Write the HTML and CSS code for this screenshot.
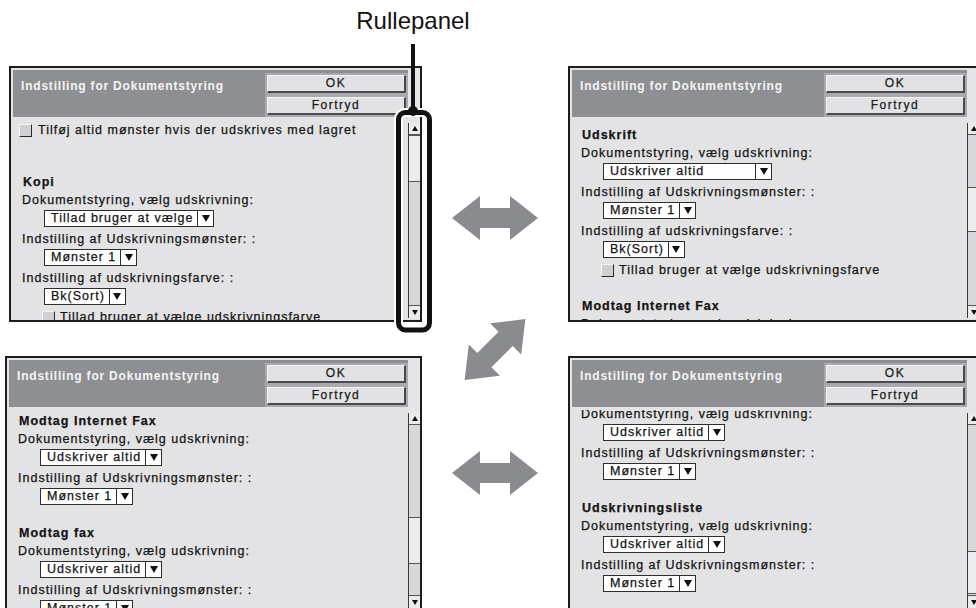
FILE: index.html
```html
<!DOCTYPE html>
<html lang="da">
<head>
    <meta charset="UTF-8">
    <title>Rullepanel</title>
    <link rel="stylesheet" href="styles.css">
</head>
<body>
    <div class="canvas">
        <div class="screens">

            <!-- 1: top of the list -->
            <div class="panel">
                <div class="main">
                    <div class="header">
                        <div class="title">Indstilling for Dokumentstyring</div>
                        <div class="btns">
                            <div class="btn">OK</div>
                            <div class="btn">Fortryd</div>
                        </div>
                    </div>
                    <div class="body">
                        <div class="list">
                            <div class="check"><span class="box"></span>Tilføj altid mønster hvis der udskrives med lagret</div>
                            <div class="gap big"></div>
                            <div class="head">Kopi</div>
                            <div class="line">Dokumentstyring, vælg udskrivning:</div>
                            <div class="pick"><span class="select"><span class="val">Tillad bruger at vælge</span><span class="arrow"></span></span></div>
                            <div class="line">Indstilling af Udskrivningsmønster: :</div>
                            <div class="pick"><span class="select"><span class="val">Mønster 1</span><span class="arrow"></span></span></div>
                            <div class="line">Indstilling af udskrivningsfarve: :</div>
                            <div class="pick"><span class="select"><span class="val">Bk(Sort)</span><span class="arrow"></span></span></div>
                            <div class="check sub"><span class="box"></span>Tillad bruger at vælge udskrivningsfarve</div>
                        </div>
                    </div>
                </div>
                <div class="side">
                    <div class="sb">
                        <div class="sb-btn up"></div>
                        <div class="sb-track"><div class="sb-thumb" style="margin-top:0;height:47px"></div></div>
                        <div class="sb-btn down"></div>
                    </div>
                </div>
            </div>

            <!-- 2 -->
            <div class="panel">
                <div class="main">
                    <div class="header">
                        <div class="title">Indstilling for Dokumentstyring</div>
                        <div class="btns">
                            <div class="btn">OK</div>
                            <div class="btn">Fortryd</div>
                        </div>
                    </div>
                    <div class="body">
                        <div class="list" style="margin-top:8px">
                            <div class="head">Udskrift</div>
                            <div class="line">Dokumentstyring, vælg udskrivning:</div>
                            <div class="pick"><span class="select wide"><span class="val">Udskriver altid</span><span class="arrow"></span></span></div>
                            <div class="line">Indstilling af Udskrivningsmønster: :</div>
                            <div class="pick"><span class="select"><span class="val">Mønster 1</span><span class="arrow"></span></span></div>
                            <div class="line">Indstilling af udskrivningsfarve: :</div>
                            <div class="pick"><span class="select"><span class="val">Bk(Sort)</span><span class="arrow"></span></span></div>
                            <div class="check sub"><span class="box"></span>Tillad bruger at vælge udskrivningsfarve</div>
                            <div class="gap"></div>
                            <div class="head">Modtag Internet Fax</div>
                            <div class="line">Dokumentstyring, vælg udskrivning:</div>
                        </div>
                    </div>
                </div>
                <div class="side">
                    <div class="sb">
                        <div class="sb-btn up"></div>
                        <div class="sb-track"><div class="sb-thumb" style="margin-top:52px;height:45px"></div></div>
                        <div class="sb-btn down"></div>
                    </div>
                </div>
            </div>

            <!-- 3 -->
            <div class="panel shift">
                <div class="main">
                    <div class="header">
                        <div class="title">Indstilling for Dokumentstyring</div>
                        <div class="btns">
                            <div class="btn">OK</div>
                            <div class="btn">Fortryd</div>
                        </div>
                    </div>
                    <div class="body">
                        <div class="list" style="margin-top:4px">
                            <div class="head">Modtag Internet Fax</div>
                            <div class="line">Dokumentstyring, vælg udskrivning:</div>
                            <div class="pick"><span class="select"><span class="val">Udskriver altid</span><span class="arrow"></span></span></div>
                            <div class="line">Indstilling af Udskrivningsmønster: :</div>
                            <div class="pick"><span class="select"><span class="val">Mønster 1</span><span class="arrow"></span></span></div>
                            <div class="gap"></div>
                            <div class="head">Modtag fax</div>
                            <div class="line">Dokumentstyring, vælg udskrivning:</div>
                            <div class="pick"><span class="select"><span class="val">Udskriver altid</span><span class="arrow"></span></span></div>
                            <div class="line">Indstilling af Udskrivningsmønster: :</div>
                            <div class="pick"><span class="select"><span class="val">Mønster 1</span><span class="arrow"></span></span></div>
                        </div>
                    </div>
                </div>
                <div class="side">
                    <div class="sb">
                        <div class="sb-btn up"></div>
                        <div class="sb-track"><div class="sb-thumb" style="margin-top:92px;height:47px"></div></div>
                        <div class="sb-btn down"></div>
                    </div>
                </div>
            </div>

            <!-- 4: bottom of the list -->
            <div class="panel">
                <div class="main">
                    <div class="header">
                        <div class="title">Indstilling for Dokumentstyring</div>
                        <div class="btns">
                            <div class="btn">OK</div>
                            <div class="btn">Fortryd</div>
                        </div>
                    </div>
                    <div class="body">
                        <div class="list" style="margin-top:-6px">
                            <div class="line">Dokumentstyring, vælg udskrivning:</div>
                            <div class="pick"><span class="select"><span class="val">Udskriver altid</span><span class="arrow"></span></span></div>
                            <div class="line">Indstilling af Udskrivningsmønster: :</div>
                            <div class="pick"><span class="select"><span class="val">Mønster 1</span><span class="arrow"></span></span></div>
                            <div class="gap"></div>
                            <div class="head">Udskrivningsliste</div>
                            <div class="line">Dokumentstyring, vælg udskrivning:</div>
                            <div class="pick"><span class="select"><span class="val">Udskriver altid</span><span class="arrow"></span></span></div>
                            <div class="line">Indstilling af Udskrivningsmønster: :</div>
                            <div class="pick"><span class="select"><span class="val">Mønster 1</span><span class="arrow"></span></span></div>
                        </div>
                    </div>
                </div>
                <div class="side">
                    <div class="sb">
                        <div class="sb-btn up"></div>
                        <div class="sb-track"><div class="sb-thumb" style="margin-top:126px;height:43px"></div></div>
                        <div class="sb-btn down"></div>
                    </div>
                </div>
            </div>

        </div>

        <div class="label">Rullepanel</div>

        <svg class="overlay" width="976" height="608" viewBox="0 0 976 608">
            <!-- callout on the scroll bar -->
            <line x1="413" y1="44" x2="413" y2="112" stroke="#111" stroke-width="4"/>
            <rect x="398.5" y="112.5" width="31" height="217.5" rx="7" fill="none" stroke="#fff" stroke-width="9"/>
            <rect x="398.5" y="112.5" width="31" height="217.5" rx="7" fill="none" stroke="#111" stroke-width="5"/>
            <circle cx="413" cy="111" r="5" fill="#111"/>

            <!-- double arrows -->
            <g fill="#8a8b8e">
                <polygon transform="translate(495 218)" points="-43,0 -15,-22 -15,-10 15,-10 15,-22 43,0 15,22 15,10 -15,10 -15,22"/>
                <polygon transform="translate(495 349.5) rotate(-45)" points="-43,0 -15,-22 -15,-10 15,-10 15,-22 43,0 15,22 15,10 -15,10 -15,22"/>
                <polygon transform="translate(495 473)" points="-43,0 -15,-22 -15,-10 15,-10 15,-22 43,0 15,22 15,10 -15,10 -15,22"/>
            </g>
        </svg>
    </div>
</body>
</html>
```

FILE: styles.css
```css
* {
    box-sizing: border-box;
}

body {
    margin: 0;
    background: #fff;
    font-family: "Liberation Sans", Arial, sans-serif;
}

.canvas {
    position: relative;
    width: 976px;
    height: 608px;
    overflow: hidden;
}

/* four screenshots of the panel, two by two */
.screens {
    display: grid;
    grid-template-columns: 413px 413px;
    column-gap: 146px;
    row-gap: 34px;
    padding: 66px 0 0 9px;
}

.panel {
    display: flex;
    height: 256px;
    border: 2px solid #1d1d1d;
    padding: 2px 0 0 2px;
    background: #e3e3e5;
}

.panel.shift {
    margin-left: -4px;
}

.main {
    flex: 1;
    min-width: 0;
    display: flex;
    flex-direction: column;
}

.header {
    flex: none;
    height: 47px;
    background: #8e8f92;
    display: flex;
    justify-content: space-between;
    align-items: flex-start;
}

.title {
    padding: 9px 0 0 8px;
    color: #f4f4f4;
    font-size: 12px;
    font-weight: bold;
    line-height: 14px;
    letter-spacing: 0.8px;
    white-space: nowrap;
}

.btns {
    margin-top: 3px;
    width: 143px;
    padding: 2px;
    background: #a9aaad;
    display: flex;
    flex-direction: column;
    gap: 4px;
}

.btn {
    height: 18px;
    background: #e2e2e4;
    border-top: 1px solid #f4f4f4;
    border-left: 1px solid #f4f4f4;
    border-right: 2px solid #4a4a4c;
    border-bottom: 2px solid #4a4a4c;
    text-align: center;
    color: #1a1a1a;
    font-size: 12px;
    line-height: 15px;
    letter-spacing: 1.5px;
    -webkit-text-stroke: 0.25px #1a1a1a;
}

.body {
    flex: 1;
    margin-top: 3px;
    overflow: hidden;
    color: #141414;
    font-size: 12.5px;
    letter-spacing: 1px;
    -webkit-text-stroke: 0.25px #141414;
}

.line {
    height: 20px;
    line-height: 20px;
    padding-left: 9px;
    white-space: nowrap;
}

.head {
    height: 15px;
    line-height: 15px;
    padding-left: 10px;
    font-weight: bold;
    white-space: nowrap;
}

.gap {
    height: 19px;
}

.gap.big {
    height: 35px;
}

.pick {
    height: 19px;
    padding-left: 31px;
}

.check {
    display: flex;
    align-items: center;
    gap: 6px;
    height: 20px;
    padding-left: 6px;
    white-space: nowrap;
}

.check.sub {
    padding-left: 29px;
    gap: 5px;
}

.box {
    flex: none;
    width: 13px;
    height: 13px;
    background: #d0d0d2;
    border-top: 1px solid #f4f4f4;
    border-left: 1px solid #f4f4f4;
    border-right: 1px solid #2a2a2a;
    border-bottom: 1px solid #2a2a2a;
}

.select {
    display: inline-flex;
    height: 17px;
    border: 1px solid #2d2d2d;
    background: #fff;
    vertical-align: top;
}

.select .val {
    padding: 0 4px 0 6px;
    line-height: 15px;
    white-space: nowrap;
}

.select.wide .val {
    width: 151px;
}

.select .arrow {
    width: 16px;
    border-left: 1px solid #2d2d2d;
    display: flex;
    align-items: center;
    justify-content: center;
}

.select .arrow::after {
    content: "";
    border-left: 4px solid transparent;
    border-right: 4px solid transparent;
    border-top: 7px solid #111;
}

/* scroll bar column */
.side {
    width: 12px;
    flex: none;
    display: flex;
    flex-direction: column;
    padding: 53px 0 2px;
    background: #e6e6e8;
}

.sb {
    flex: 1;
    display: flex;
    flex-direction: column;
    border-left: 1px solid #3a3a3a;
    background: #d8d8da;
}

.sb-btn {
    flex: none;
    height: 12px;
    display: flex;
    align-items: center;
    justify-content: center;
    background: #ebebed;
}

.sb-btn.up {
    border-bottom: 1px solid #555;
}

.sb-btn.down {
    height: 13px;
    border-top: 1px solid #555;
}

.sb-btn::after {
    content: "";
    border-left: 3.5px solid transparent;
    border-right: 3.5px solid transparent;
}

.sb-btn.up::after {
    border-bottom: 5px solid #111;
}

.sb-btn.down::after {
    border-top: 5px solid #111;
}

.sb-track {
    flex: 1;
}

.sb-thumb {
    background: #ececee;
    border-top: 1px solid #555;
    border-bottom: 1px solid #555;
}

/* callout and arrows drawn over the screens */
.label {
    position: absolute;
    left: 413px;
    top: 7px;
    transform: translateX(-50%);
    font-size: 24px;
    color: #111;
    white-space: nowrap;
}

.overlay {
    position: absolute;
    left: 0;
    top: 0;
    pointer-events: none;
}
```
